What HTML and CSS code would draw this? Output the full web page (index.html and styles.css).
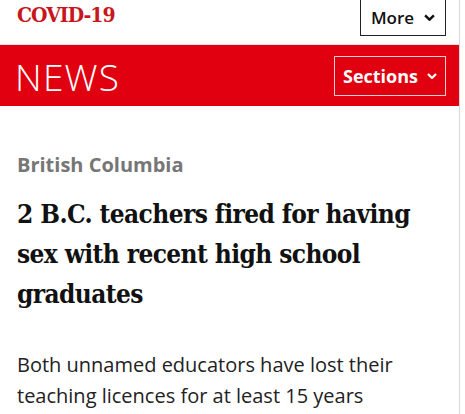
FILE: index.html
```html
<!DOCTYPE html>
<html lang="en">
<head>
    <meta charset="UTF-8">
    <title>2 B.C. teachers fired</title>
    <link rel="stylesheet" href="styles.css">
</head>
<body>
    <div class="page">
        <header class="topbar">
            <a class="covid" href="#">COVID-19</a>
            <button class="more">More
                <svg class="chev" viewBox="0 0 10 6" width="11" height="7"><path d="M1 1l4 4 4-4" fill="none" stroke="currentColor" stroke-width="2.2"/></svg>
            </button>
        </header>

        <nav class="newsbar">
            <span class="brand">NEWS</span>
            <button class="sections">Sections
                <svg class="chev" viewBox="0 0 10 6" width="10" height="6"><path d="M1 1l4 4 4-4" fill="none" stroke="currentColor" stroke-width="2.2"/></svg>
            </button>
        </nav>

        <article class="story">
            <div class="kicker">British Columbia</div>
            <h1>2 B.C. teachers fired for having sex with recent high school graduates</h1>
            <p class="dek">Both unnamed educators have lost their teaching licences for at least 15 years</p>
        </article>
    </div>
</body>
</html>
```

FILE: styles.css
```css
:root {
    --red: #e1000f;
    --dark-red: #c8161d;
    --ink: #111111;
    --grey: #767676;
}

body {
    margin: 0;
    background: #ffffff;
    font-family: 'Open Sans', sans-serif;
    color: var(--ink);
    overflow: hidden;
}

.page {
    border-right: 1px solid #d8d8d8;
    width: 459px;
    min-height: 414px;
}

.topbar {
    height: 45px;
    display: flex;
    justify-content: space-between;
    align-items: flex-start;
    padding: 0 13px 0 17px;
    border-bottom: 1px solid #e4e4e4;
    box-sizing: border-box;
}

.covid {
    font-family: 'DejaVu Serif Condensed', 'DejaVu Serif', serif;
    font-stretch: condensed;
    font-weight: 700;
    font-size: 21px;
    color: var(--dark-red);
    text-decoration: none;
    letter-spacing: -1px;
    margin-top: 2px;
}

.more {
    height: 38px;
    margin-top: -2px;
    width: 86px;
    border: 1px solid #222;
    background: #fff;
    font-family: 'Open Sans', sans-serif;
    font-weight: 600;
    font-size: 17px;
    color: #111;
    display: flex;
    align-items: center;
    justify-content: center;
    gap: 10px;
    padding: 0;
}

.newsbar {
    height: 61px;
    background: var(--red);
    display: flex;
    justify-content: space-between;
    align-items: center;
    padding: 0 13px 0 15px;
}

.brand {
    font-family: 'Open Sans', sans-serif;
    font-weight: 300;
    font-size: 37px;
    color: #fff;
    letter-spacing: 1.2px;
    margin-top: 1px;
}

.sections {
    width: 112px;
    height: 40px;
    border: 1px solid rgba(255,255,255,0.8);
    background: transparent;
    color: #fff;
    font-family: 'Open Sans', sans-serif;
    font-weight: 700;
    font-size: 18px;
    display: flex;
    align-items: center;
    justify-content: center;
    gap: 9px;
    padding: 0;
}

.story {
    padding: 46px 17px 0 17px;
}

.kicker {
    font-weight: 700;
    font-size: 20px;
    color: var(--grey);
    line-height: 26px;
}

h1 {
    font-family: 'DejaVu Serif Condensed', 'DejaVu Serif', serif;
    font-stretch: condensed;
    font-weight: 700;
    font-size: 26px;
    line-height: 40px;
    margin: 16px 0 0;
    letter-spacing: -0.6px;
}

.dek {
    font-size: 20px;
    line-height: 31px;
    color: #222;
    margin: 35px 0 0;
}
```
